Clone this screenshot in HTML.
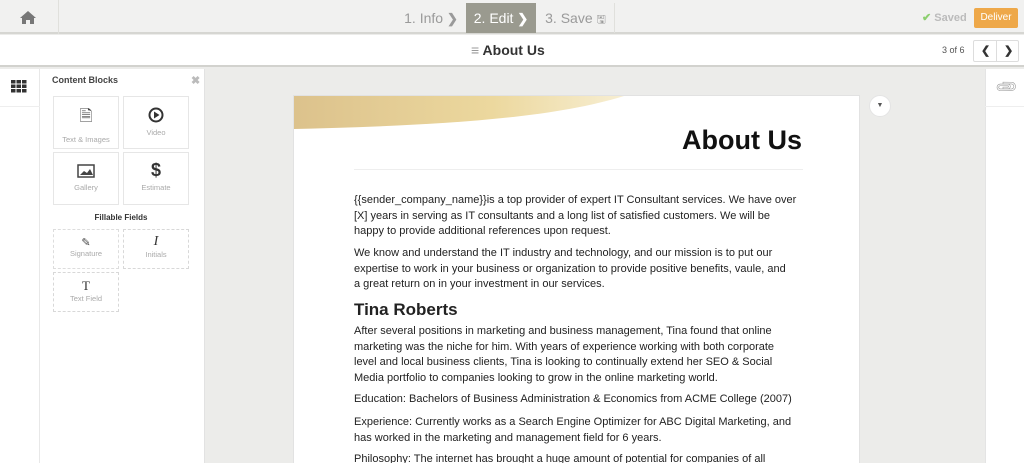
<!DOCTYPE html>
<html><head><style>
*{margin:0;padding:0;box-sizing:border-box}
html,body{width:1024px;height:463px;overflow:hidden}
body{font-family:"Liberation Sans",sans-serif;background:#ececea;position:relative}
.a{position:absolute}
.top{left:0;top:0;width:1024px;height:34px;background:#f1f1f0;border-bottom:2px solid #d6d6d2}
.bar2{left:0;top:35px;width:1024px;height:32px;background:#fff;border-bottom:2px solid #d2d2ce}
.step{top:3px;height:30px;font-size:14px;color:#9a9a9a;line-height:30px;text-align:center}
.blk{background:#fff;border:1px solid #e6e6e6;text-align:center;font-size:7.5px;color:#aaa}
.dash{border:1px dashed #d8d8d8}
.doc{left:293px;top:95px;width:567px;height:368px;background:#fff;border:1px solid #e2e2e2;border-bottom:none;overflow:hidden}
.t{position:absolute;left:60px;font-size:11px;color:#222;white-space:nowrap;line-height:15.7px}
</style></head><body>
<div class="a top"></div>
<div class="a" style="left:58px;top:0;width:1px;height:34px;background:#e0e0dc"></div>
<svg class="a" style="left:20px;top:11px" width="16" height="13" viewBox="0 0 16 13"><path d="M8 0L0 7h2v6h4V9h4v4h4V7h2z" fill="#777"/></svg>
<div class="a step" style="left:397px;width:68px">1. Info <b style="font-size:13px">&#x276F;</b></div>
<div class="a step" style="left:466px;width:70px;background:#9a9a8f;color:#fff">2. Edit <b style="font-size:13px">&#x276F;</b></div>
<div class="a step" style="left:537px;width:78px;border-right:1px solid #e0e0dc">3. Save <span style="font-size:11px">&#x1F5AB;</span></div>
<div class="a" style="left:922px;top:11px;font-size:11px;color:#bbb;font-weight:bold"><span style="color:#8ccf6e">&#x2714;</span> Saved</div>
<div class="a" style="left:974px;top:8px;width:44px;height:20px;background:#eea849;color:#fff;font-size:10px;line-height:20px;text-align:center;border-radius:2px">Deliver</div>
<div class="a bar2"></div>
<div class="a" style="left:471px;top:42px;font-size:14px;font-weight:bold;color:#333"><span style="color:#999;font-weight:normal">&#x2261;</span> About Us</div>
<div class="a" style="left:942px;top:45px;font-size:9px;color:#555">3 of 6</div>
<div class="a" style="left:973px;top:40px;width:46px;height:22px;border:1px solid #ddd;border-radius:2px;background:#fff"><div class="a" style="left:22px;top:0;width:1px;height:20px;background:#ddd"></div><b class="a" style="left:7px;top:3px;font-size:11px;color:#333">&#x276E;</b><b class="a" style="left:30px;top:3px;font-size:11px;color:#333">&#x276F;</b></div>
<div class="a" style="left:0;top:69px;width:40px;height:394px;background:#fff;border-right:1px solid #e8e8e8"></div>
<div class="a" style="left:0;top:106px;width:40px;height:1px;background:#eee"></div>
<svg class="a" style="left:11px;top:80px" width="16" height="13"><g fill="#333"><rect x="0" y="0" width="4.5" height="3.5"/><rect x="5.5" y="0" width="4.5" height="3.5"/><rect x="11" y="0" width="4.5" height="3.5"/><rect x="0" y="4.5" width="4.5" height="3.5"/><rect x="5.5" y="4.5" width="4.5" height="3.5"/><rect x="11" y="4.5" width="4.5" height="3.5"/><rect x="0" y="9" width="4.5" height="3.5"/><rect x="5.5" y="9" width="4.5" height="3.5"/><rect x="11" y="9" width="4.5" height="3.5"/></g></svg>
<div class="a" style="left:40px;top:69px;width:165px;height:394px;background:#fff;border-right:1px solid #e2e2e2"></div>
<div class="a" style="left:52px;top:75px;font-size:9px;font-weight:bold;color:#444">Content Blocks</div>
<div class="a" style="left:191px;top:74px;font-size:11px;color:#bbb;font-weight:bold">&#x2716;</div>
<div class="a blk" style="left:53px;top:96px;width:66px;height:53px"><div style="font-size:16px;color:#444;margin-top:8px">&#x1F5CE;</div><div style="margin-top:3px">Text &amp; Images</div></div>
<div class="a blk" style="left:123px;top:96px;width:66px;height:53px"><svg style="margin-top:10px" width="16" height="16"><circle cx="8" cy="8" r="6.5" fill="none" stroke="#333" stroke-width="2"/><path d="M6 4.5v7l5.5-3.5z" fill="#333"/></svg><div style="margin-top:3px">Video</div></div>
<div class="a blk" style="left:53px;top:152px;width:66px;height:53px"><svg style="margin-top:11px" width="18" height="14"><rect x="1" y="1" width="16" height="12" fill="none" stroke="#444" stroke-width="1.5"/><path d="M3 11l4-4 3 2 3-4 3 6z" fill="#444"/></svg><div style="margin-top:3px">Gallery</div></div>
<div class="a blk" style="left:123px;top:152px;width:66px;height:53px"><div style="font-size:18px;font-weight:bold;color:#333;margin-top:7px">$</div><div style="margin-top:2px">Estimate</div></div>
<div class="a" style="left:53px;top:213px;width:136px;text-align:center;font-size:8px;font-weight:bold;color:#333">Fillable Fields</div>
<div class="a blk dash" style="left:53px;top:229px;width:66px;height:40px;border-color:#ddd"><div style="font-size:11px;color:#444;margin-top:6px">&#x270E;</div><div>Signature</div></div>
<div class="a blk dash" style="left:123px;top:229px;width:66px;height:40px"><div style="font-size:14px;font-family:'Liberation Serif',serif;font-style:italic;color:#333;margin-top:4px">I</div><div>Initials</div></div>
<div class="a blk dash" style="left:53px;top:272px;width:66px;height:40px"><div style="font-size:13px;font-family:'Liberation Serif',serif;color:#333;margin-top:5px">T</div><div>Text Field</div></div>
<div class="a" style="left:985px;top:69px;width:39px;height:394px;background:#fff;border-left:1px solid #e4e4e4"></div>
<div class="a" style="left:985px;top:106px;width:39px;height:1px;background:#eee"></div>
<div class="a" style="left:997px;top:78px;font-size:15px;color:#999;transform:rotate(-45deg)">&#x1F4CE;&#xFE0E;</div>
<div class="a" style="left:869px;top:95px;width:22px;height:22px;border-radius:50%;background:#fff;border:1px solid #e4e4e4;font-size:7px;color:#555;text-align:center;line-height:20px">&#x25BC;</div>
<div class="a doc">
<svg class="a" style="left:0;top:0" width="567" height="40"><defs><linearGradient id="g" x1="0" x2="1"><stop offset="0" stop-color="#dcc28c"/><stop offset="0.6" stop-color="#ecd89e"/><stop offset="1" stop-color="#f7eed2"/></linearGradient></defs><path d="M0 0H330C250 25 120 30 0 33Z" fill="url(#g)"/></svg>
<div class="a" style="left:388px;top:29px;font-size:27px;font-weight:bold;color:#111">About Us</div>
<div class="a" style="left:60px;top:73px;width:449px;height:1px;background:#eee"></div>
<div class="t" style="top:97px">{{sender_company_name}}is a top provider of expert IT Consultant services. We have over</div>
<div class="t" style="top:112.7px">[X] years in serving as IT consultants and a long list of satisfied customers. We will be</div>
<div class="t" style="top:128.4px">happy to provide additional references upon request.</div>
<div class="t" style="top:150px">We know and understand the IT industry and technology, and our mission is to put our</div>
<div class="t" style="top:165.7px">expertise to work in your business or organization to provide positive benefits, vaule, and</div>
<div class="t" style="top:181.4px">a great return on in your investment in our services.</div>
<div class="t" style="top:204px;font-size:17px;font-weight:bold;line-height:20px">Tina Roberts</div>
<div class="t" style="top:228px">After several positions in marketing and business management, Tina found that online</div>
<div class="t" style="top:243.7px">marketing was the niche for him. With years of experience working with both corporate</div>
<div class="t" style="top:259.4px">level and local business clients, Tina is looking to continually extend her SEO &amp; Social</div>
<div class="t" style="top:275.1px">Media portfolio to companies looking to grow in the online marketing world.</div>
<div class="t" style="top:296px">Education: Bachelors of Business Administration &amp; Economics from ACME College (2007)</div>
<div class="t" style="top:319px">Experience: Currently works as a Search Engine Optimizer for ABC Digital Marketing, and</div>
<div class="t" style="top:334.7px">has worked in the marketing and management field for 6 years.</div>
<div class="t" style="top:356px">Philosophy: The internet has brought a huge amount of potential for companies of all</div>
</div>
</body></html>
